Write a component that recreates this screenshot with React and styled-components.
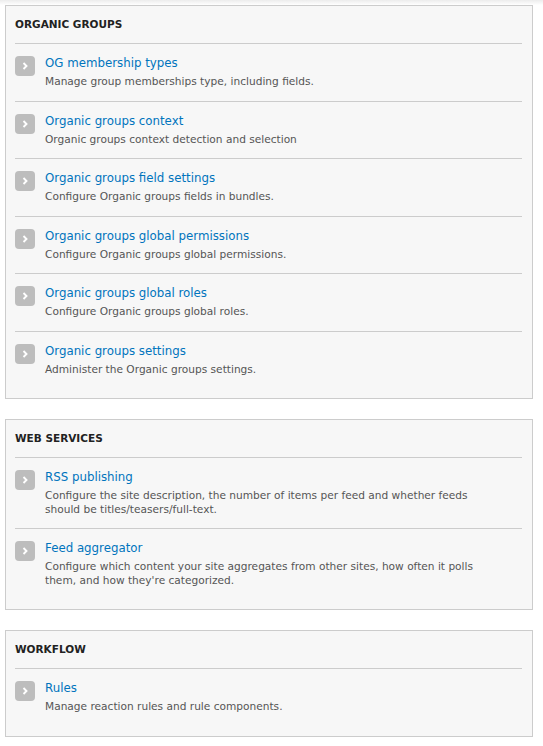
import styled, { createGlobalStyle } from "styled-components";

//  //  //  GLOBAL   //  //  //

const GlobalStyle = createGlobalStyle`
  body {
    margin: 0;
    background: #fff;
    font-family: "DejaVu Sans", "Noto Sans", sans-serif;
    color: #333;
  }
`;

//  //  //  STYLED-COMPONENTS   //  //  //

const Page = styled.div`
  display: flex;
  flex-direction: column;
  gap: 20px;
  padding: 5px 10px 10px 5px;
  background: linear-gradient(#ececec, #fff 5px);
`;

const Panel = styled.section`
  background: #f7f7f7;
  border: 1px solid #ccc;
  padding: 0 10px 10px 9px;
`;

const PanelTitle = styled.h3`
  margin: 0;
  height: 37px;
  line-height: 37px;
  font-size: 10.5px;
  font-weight: bold;
  text-transform: uppercase;
  color: #222;
  border-bottom: 1px solid #ccc;
`;

const List = styled.ul`
  list-style: none;
  margin: 0;
  padding: 0;
`;

const Row = styled.li`
  display: flex;
  gap: 10px;
  padding: 11px 0 12px 0;
  border-bottom: ${(p) => (p.$last ? "none" : "1px solid #ccc")};
`;

const Arrow = styled.span`
  flex: none;
  width: 20px;
  height: 20px;
  margin-top: 1px;
  border-radius: 4px;
  background: #bdbdbd;
  display: flex;
  align-items: center;
  justify-content: center;
`;

const Body = styled.div`
  display: flex;
  flex-direction: column;
`;

const Link = styled.a`
  color: #0074bd;
  text-decoration: none;
  font-size: 11.8px;
  line-height: 17px;
`;

const Desc = styled.div`
  font-size: 10.6px;
  line-height: 13.5px;
  color: #555;
  margin-top: 3px;
  padding-right: 40px;
`;

//  //  //  VARIABLES   //  //  //

const sections = [
  {
    title: "Organic groups",
    items: [
      ["OG membership types", "Manage group memberships type, including fields."],
      ["Organic groups context", "Organic groups context detection and selection"],
      ["Organic groups field settings", "Configure Organic groups fields in bundles."],
      ["Organic groups global permissions", "Configure Organic groups global permissions."],
      ["Organic groups global roles", "Configure Organic groups global roles."],
      ["Organic groups settings", "Administer the Organic groups settings."],
    ],
  },
  {
    title: "Web services",
    items: [
      [
        "RSS publishing",
        "Configure the site description, the number of items per feed and whether feeds should be titles/teasers/full-text.",
      ],
      [
        "Feed aggregator",
        "Configure which content your site aggregates from other sites, how often it polls them, and how they're categorized.",
      ],
    ],
  },
  {
    title: "Workflow",
    items: [["Rules", "Manage reaction rules and rule components."]],
  },
];

const Chevron = () => (
  <svg width="8" height="10" viewBox="0 0 8 10">
    <path d="M2.5 2 L5.5 5 L2.5 8" fill="none" stroke="#fff" strokeWidth="1.9" />
  </svg>
);

//  //  //  FUNCTION    //  //  //

export default function App() {
  return (
    <>
      <GlobalStyle />
      <Page>
        {sections.map((s) => (
          <Panel key={s.title}>
            <PanelTitle>{s.title}</PanelTitle>
            <List>
              {s.items.map(([name, desc], i) => (
                <Row key={name} $last={i === s.items.length - 1}>
                  <Arrow>
                    <Chevron />
                  </Arrow>
                  <Body>
                    <Link href="#">{name}</Link>
                    <Desc>{desc}</Desc>
                  </Body>
                </Row>
              ))}
            </List>
          </Panel>
        ))}
      </Page>
    </>
  );
}
